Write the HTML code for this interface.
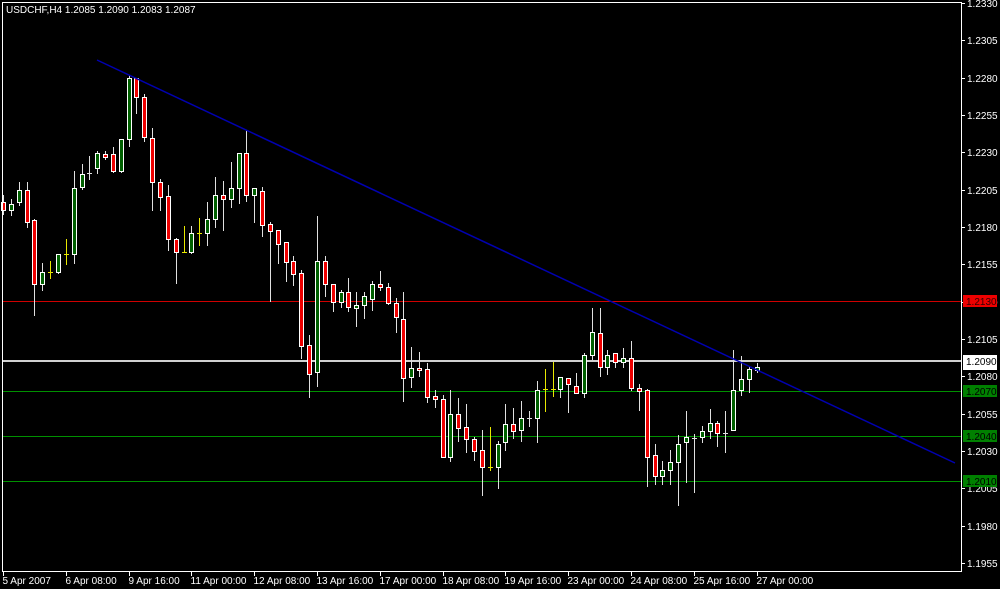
<!DOCTYPE html>
<html><head><meta charset="utf-8"><style>
html,body{margin:0;padding:0;background:#000;width:1000px;height:589px;overflow:hidden}
svg{display:block}
line,rect{shape-rendering:crispEdges}
text{font-family:"Liberation Sans",sans-serif;font-size:10px;fill:#fff}
</style></head><body>
<svg id="s" width="1000" height="589" xmlns="http://www.w3.org/2000/svg">
<rect width="1000" height="589" fill="#000"/>
<g id="h"></g>
<line x1="3" y1="301.5" x2="961" y2="301.5" stroke="#d00000"/>
<line x1="3" y1="361" x2="961" y2="361" stroke="#d0d0d0" stroke-width="2"/>
<line x1="3" y1="391.5" x2="961" y2="391.5" stroke="#009000"/>
<line x1="3" y1="436.5" x2="961" y2="436.5" stroke="#009000"/>
<line x1="3" y1="481.5" x2="961" y2="481.5" stroke="#009000"/>
<g id="c"></g>
<line x1="97" y1="60" x2="955" y2="463" stroke="#0000b0" stroke-width="1.5" style="shape-rendering:auto"/>
<line x1="2.5" y1="2" x2="2.5" y2="571" stroke="#fff"/>
<line x1="2" y1="2.5" x2="961" y2="2.5" stroke="#fff"/>
<line x1="961.5" y1="2" x2="961.5" y2="572" stroke="#fff"/>
<line x1="2" y1="571.5" x2="962" y2="571.5" stroke="#fff"/>
<text x="6" y="13">USDCHF,H4  1.2085 1.2090 1.2083 1.2087</text>
<g id="ax"></g>
<rect x="963" y="295" width="34" height="12" fill="#ee0000"/><text x="966" y="305" style="fill:#300">1.2130</text>
<rect x="963" y="355" width="34" height="15" fill="#fff"/><text x="966" y="365" style="fill:#000">1.2090</text>
<rect x="963" y="385" width="34" height="12" fill="#008000"/><text x="966" y="395" style="fill:#000">1.2070</text>
<rect x="963" y="430" width="34" height="12" fill="#008000"/><text x="966" y="440" style="fill:#000">1.2040</text>
<rect x="963" y="475" width="34" height="12" fill="#008000"/><text x="966" y="485" style="fill:#000">1.2010</text>
</svg>
<script>
var NS="http://www.w3.org/2000/svg";
function el(p,t,a,txt){var e=document.createElementNS(NS,t);for(var k in a)e.setAttribute(k,a[k]);if(txt)e.textContent=txt;document.getElementById(p).appendChild(e);}
var C=[[202,210,195,215],[210,204,199,216],[202,190,182,206],[190,222,182,228],[220,284,219,316],[284,272,263,291],[272,272,261,279],[272,254,254,274],[254,254,239,265],[254,188,171,264],[187,174,164,190],[173,173,156,180],[168,153,151,174],[154,157,151,160],[154,171,147,173],[171,139,139,173],[139,78,75,147],[78,97,78,114],[97,137,94,142],[138,182,128,211],[182,197,179,211],[196,239,185,251],[239,252,238,284],[252,252,226,252],[252,233,226,254],[233,233,218,246],[233,219,202,246],[219,195,177,228],[195,199,181,231],[199,188,162,208],[188,153,153,204],[153,195,130,202],[195,188,188,223],[191,225,187,237],[224,231,222,302],[230,244,230,264],[242,262,242,282],[261,274,256,286],[273,346,270,359],[345,374,335,398],[372,261,216,387],[261,284,256,297],[284,302,284,312],[302,292,290,308],[292,307,278,312],[308,305,292,327],[305,296,292,319],[299,284,281,311],[284,287,271,291],[287,303,283,305],[303,317,298,333],[319,378,292,402],[377,368,347,388],[368,370,352,377],[369,397,363,403],[396,399,390,408],[399,457,395,458],[457,414,390,462],[414,428,398,442],[427,439,404,453],[439,451,437,461],[450,467,430,496],[467,467,427,471],[467,444,441,489],[442,424,404,451],[424,431,408,439],[430,418,401,442],[418,418,411,427],[418,390,381,443],[389,389,369,412],[389,389,362,397],[389,377,377,398],[378,384,378,413],[386,393,373,393],[393,355,353,398],[355,332,308,360],[333,367,308,377],[367,355,350,375],[353,362,353,368],[362,358,348,368],[358,388,341,391],[388,391,384,411],[390,457,389,487],[455,476,444,485],[476,470,461,485],[470,462,450,485],[462,444,435,506],[442,437,411,483],[438,438,434,493],[437,431,426,443],[431,423,409,439],[423,433,421,447],[433,433,411,453],[430,390,350,430],[390,379,356,396],[379,369,366,393],[370,367,363,373]];
C.forEach(function(c,i){
 var x=Math.round(3+7.85*i)+0.5,o=c[0],cl=c[1],hi=c[2],lo=c[3];
 var doji=Math.abs(o-cl)<1;
 var yel=doji&&[6,8,23,25,62,69,70].indexOf(i)>=0;
 var wc=yel?"#e8e800":"#e0e0e0";
 el("c","line",{x1:x,y1:hi,x2:x,y2:lo,stroke:wc});
 if(doji){el("c","line",{x1:x-2.5,y1:o+0.5,x2:x+2.5,y2:o+0.5,stroke:wc});return;}
 var t=Math.min(o,cl),b=Math.max(o,cl);
 el("c","rect",{x:x-2,y:t+0.5,width:4,height:b-t,fill:cl<o?"#006000":"#ee0000",stroke:"#fff","stroke-width":1});
});
var P=["1.2330","1.2305","1.2280","1.2255","1.2230","1.2205","1.2180","1.2155","1.2130","1.2105","1.2080","1.2055","1.2030","1.2005","1.1980","1.1955"];
P.forEach(function(p,k){var y=Math.round(3+37.33*k);
 el("ax","line",{x1:961,y1:y+0.5,x2:965,y2:y+0.5,stroke:"#fff"});
 el("ax","text",{x:967,y:y+4},p);});
var D=["5 Apr 2007","6 Apr 08:00","9 Apr 16:00","11 Apr 00:00","12 Apr 08:00","13 Apr 16:00","17 Apr 00:00","18 Apr 08:00","19 Apr 16:00","23 Apr 00:00","24 Apr 08:00","25 Apr 16:00","27 Apr 00:00"];
D.forEach(function(d,k){var x=Math.round(3+62.8*k)+0.5;
 el("ax","line",{x1:x,y1:571,x2:x,y2:576,stroke:"#fff"});
 el("ax","text",{x:x-1,y:584},d);});
</script>
</body></html>
